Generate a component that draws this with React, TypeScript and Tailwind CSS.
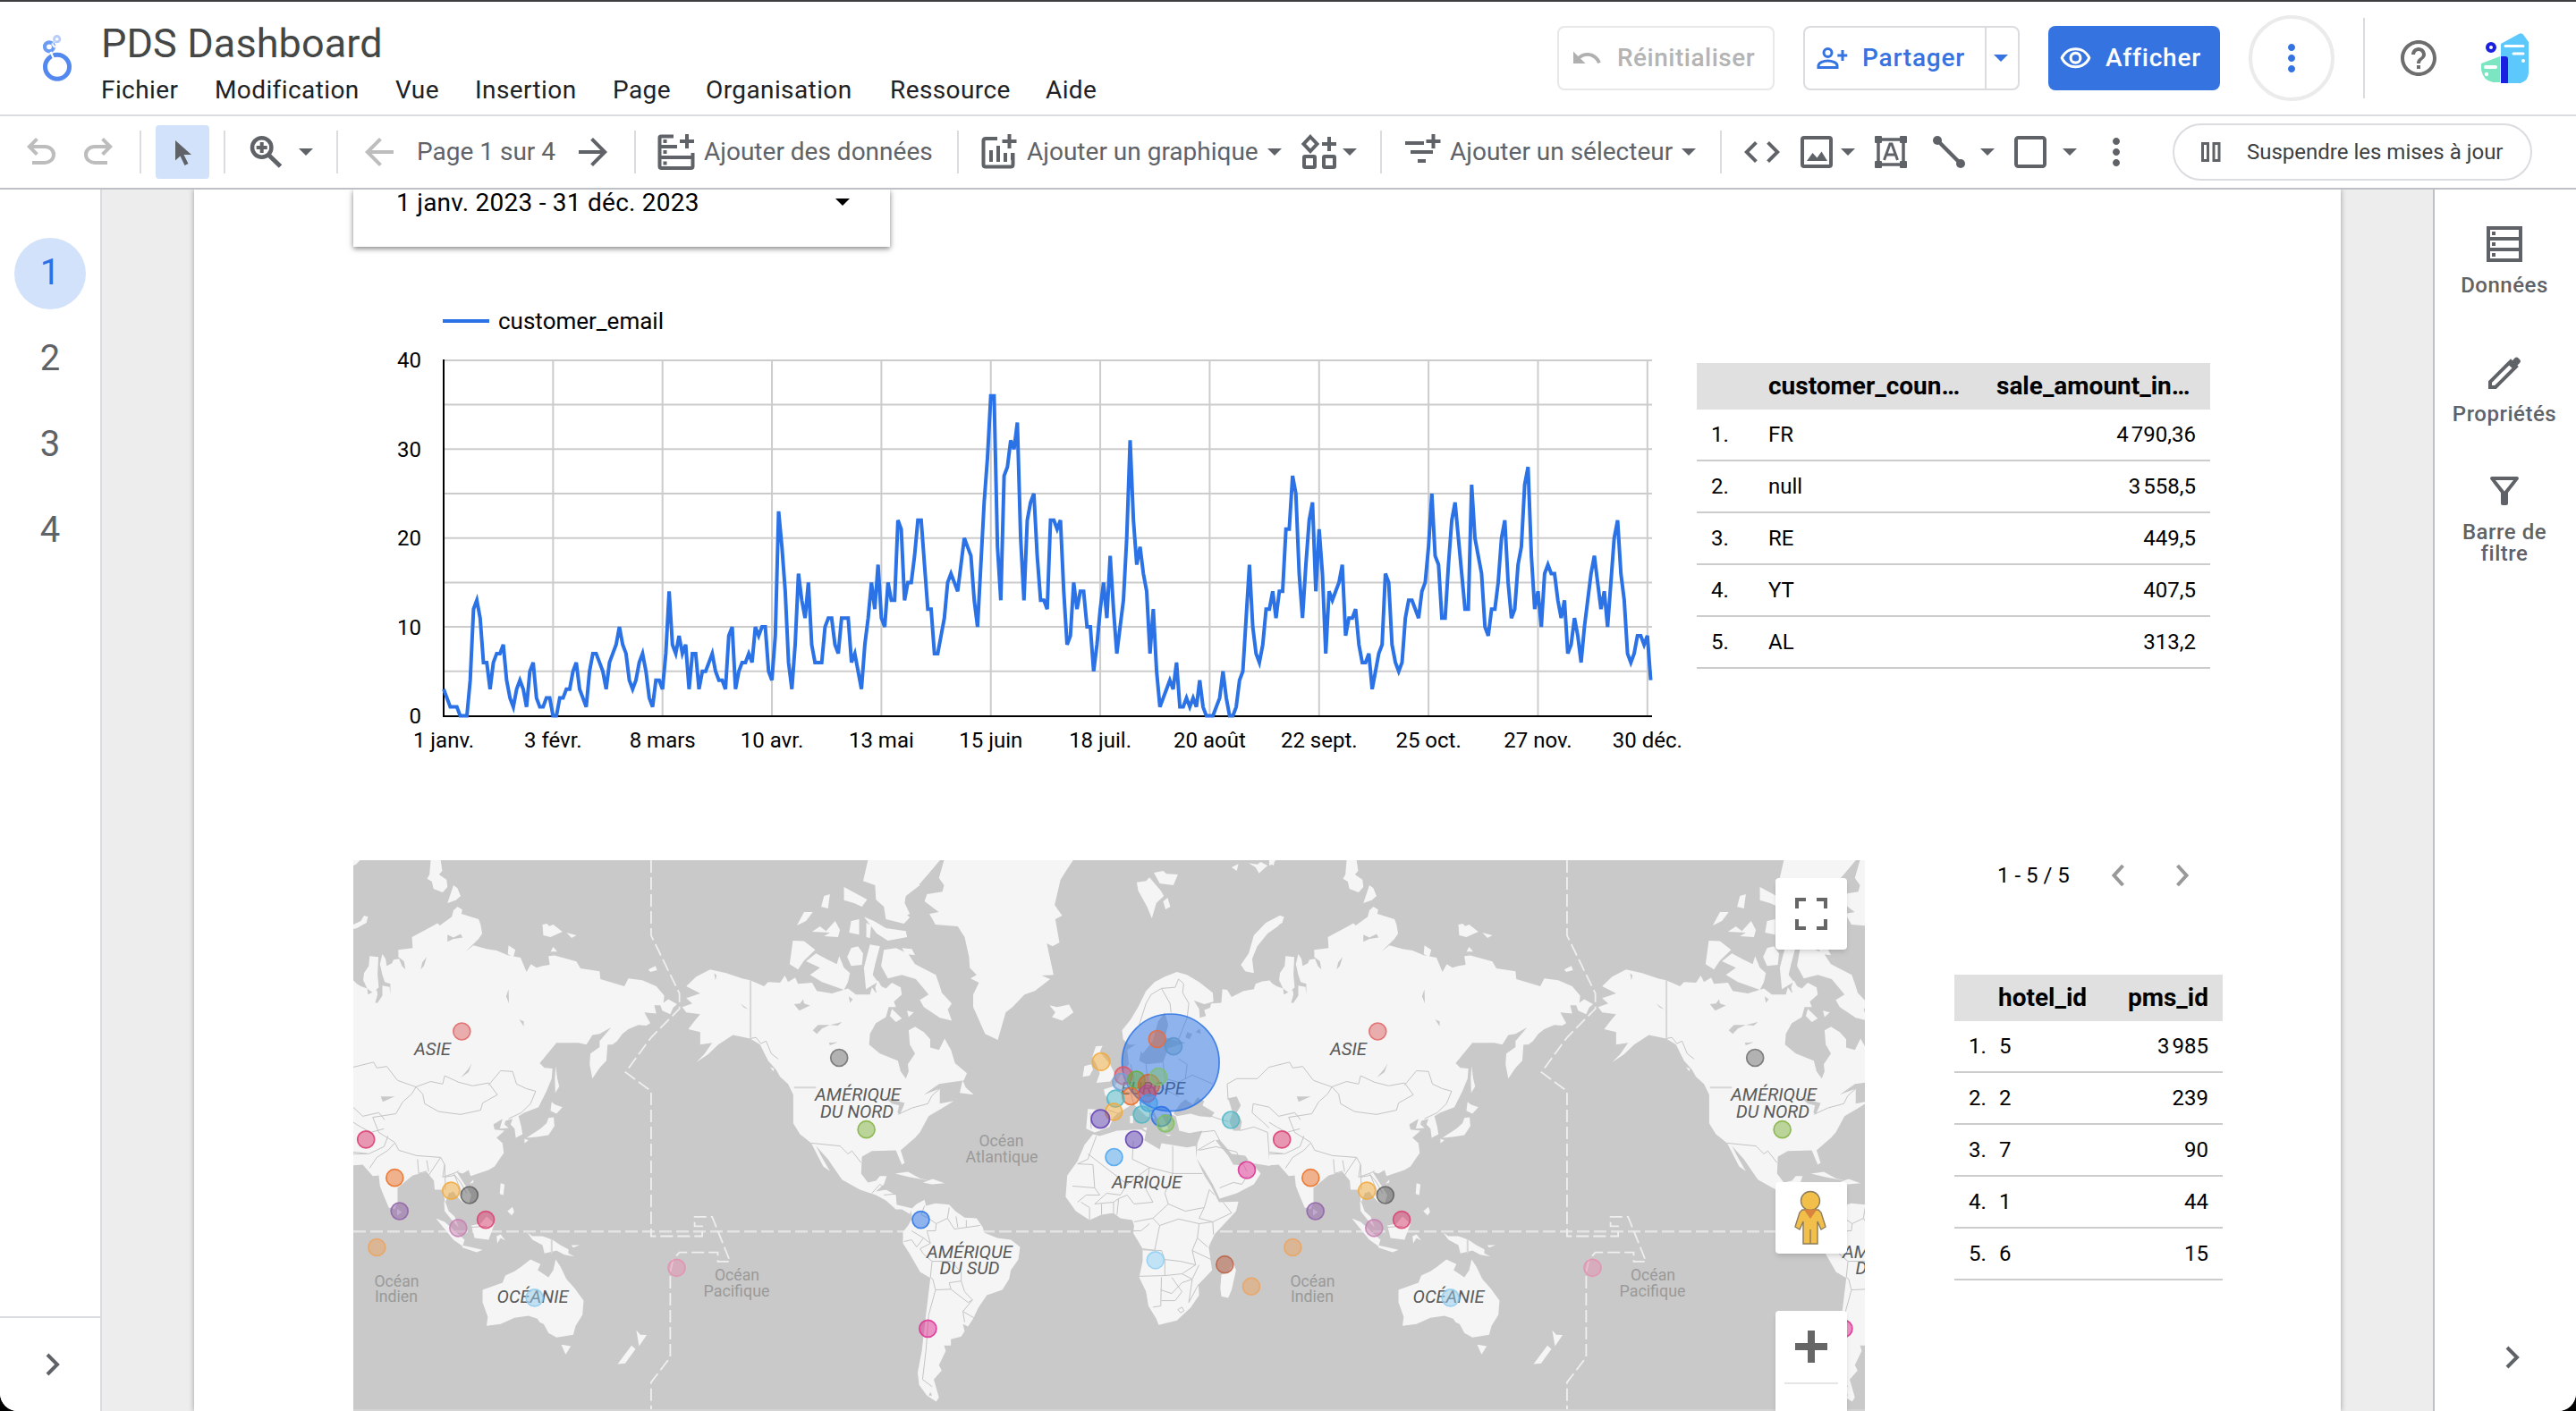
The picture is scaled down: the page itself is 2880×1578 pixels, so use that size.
import React from 'react';
import {
  MdArrowBack,
  MdArrowForward,
  MdCode,
  MdHelpOutline,
  MdMoreVert,
  MdOutlineFilterAlt,
  MdOutlineVisibility,
  MdUndo,
} from 'react-icons/md';

const UNDO =
  'M280-200v-80h284q63 0 109.5-40T720-420q0-60-46.5-100T564-560H312l104 104-56 56-200-200 200-200 56 56-104 104h252q97 0 169.5 63T800-420q0 94-72.5 157T564-200H280Z';

function Caret({ className = '' }: { className?: string }) {
  return (
    <svg className={'h-2 w-4 shrink-0 ' + className} viewBox="0 0 16 8" fill="currentColor">
      <path d="M0 0h16L8 8z" />
    </svg>
  );
}

function Divider({ className = '' }: { className?: string }) {
  return <div className={'h-12 w-0.5 shrink-0 bg-[#dadce0] ' + className} />;
}

const MENU: [string, string][] = [
  ['Fichier', 'w-[127px]'],
  ['Modification', 'w-[202px]'],
  ['Vue', 'w-[89px]'],
  ['Insertion', 'w-[154px]'],
  ['Page', 'w-[104px]'],
  ['Organisation', 'w-[206px]'],
  ['Ressource', 'w-[174px]'],
  ['Aide', 'w-[80px]'],
];

function Logo() {
  return (
    <svg className="h-[56px] w-[36px] overflow-visible" viewBox="0 0 36 56" fill="none">
      <circle cx="17.700" cy="3.700" r="3.200" stroke="#b4cdfa" strokeWidth="2.800" />
      <path d="M15.500 5.500l-4 4" stroke="#b4cdfa" strokeWidth="2" />
      <circle cx="9" cy="12.300" r="5" stroke="#6b9bf3" strokeWidth="4.200" />
      <circle cx="18" cy="34.700" r="13.500" stroke="#5388ef" strokeWidth="5" />
      <path d="M10.500 18l4 8.500M12 9l3.500 4" stroke="#fff" strokeWidth="2.200" />
      <path d="M11.800 9.500l4.200-4.200" stroke="#cfdffb" strokeWidth="1.600" />
    </svg>
  );
}

function Avatar() {
  return (
    <svg className="h-[58px] w-[54px]" viewBox="0 0 54 58">
      <path d="M22 13L42 2q4-2 6 2l5 7v34q0 9-9 12H22z" fill="#5cc8fb" />
      <path d="M0 35l21-8v29H13Q2 54 0 42z" fill="#7ce6c3" />
      <path d="M22 27h5q3 0 3 3v27h-8z" fill="#1b1fe0" />
      <circle cx="11" cy="17" r="4" fill="none" stroke="#1b1fe0" strokeWidth="4" />
      <path d="M27 15.500h20M36 24h11" stroke="#fff" strokeWidth="3" strokeLinecap="round" />
      <path d="M5 39h11" stroke="#fff" strokeWidth="4" strokeLinecap="round" />
      <circle cx="47" cy="32" r="2" fill="#fff" />
      <circle cx="6" cy="47" r="2.200" fill="#fff" />
    </svg>
  );
}

function Header() {
  return (
    <header className="flex h-[130px] border-t-2 border-b-2 border-t-[#3f3f42] border-b-[#dadce0] bg-white">
      <div className="mt-[38px] ml-[46px]">
        <Logo />
      </div>
      <div className="ml-[31px] flex h-[126px] w-[1400px] flex-col">
        <div className="mt-[18px] h-[58px] text-[45px] leading-[58px] tracking-[0.1px] text-[#444746]">PDS Dashboard</div>
        <nav className="mt-[4px] flex text-[28px] leading-[38px] tracking-[0.4px] text-[#202124]">
          {MENU.map(([label, w]) => (
            <div key={label} className={'shrink-0 whitespace-nowrap ' + w}>
              {label}
            </div>
          ))}
        </nav>
      </div>
      <div className="ml-[228px] flex h-[126px] items-center text-[28px] font-medium tracking-[0.5px]">
        <div className="flex h-[72px] w-[243px] items-center rounded-lg border-2 border-[#e8e8e8] pl-[13px] text-[#b4b4b4]">
          <MdUndo className="size-[36px] text-[#b0b0b0]" />
          <span className="ml-[16px]">Réinitialiser</span>
        </div>
        <div className="ml-[32px] flex h-[72px] w-[242px] items-center rounded-lg border-2 border-[#dadce0] text-[#3473e0]">
          <svg className="ml-[12px] size-[36px]" viewBox="0 0 24 24" fill="none" stroke="currentColor" strokeWidth="2">
            <circle cx="9" cy="8" r="3" />
            <path d="M2 19v-1.500c0-2.200 4.200-3.500 7-3.500s7 1.300 7 3.500V19zM20 6v8M16.200 10h7.300" />
          </svg>
          <span className="ml-[16px] w-[137px] tracking-[0.8px]">Partager</span>
          <div className="h-[68px] w-0.5 bg-[#dadce0]" />
          <Caret className="ml-[8px]" />
        </div>
        <div className="ml-[32px] flex h-[72px] w-[192px] items-center rounded-lg bg-[#3473e0] pl-[12px] text-white">
          <MdOutlineVisibility className="size-[37px]" />
          <span className="ml-[15px] tracking-[0.8px]">Afficher</span>
        </div>
        <div className="ml-[32px] flex size-[96px] items-center justify-center rounded-full border-4 border-[#ebebeb] text-[#3473e0]">
          <MdMoreVert className="size-12" />
        </div>
        <div className="ml-[32px] h-[90px] w-0.5 bg-[#dadce0]" />
        <MdHelpOutline className="ml-[36px] size-12 text-[#6e6e6e]" />
        <div className="ml-[46px]">
          <Avatar />
        </div>
      </div>
    </header>
  );
}

function Toolbar() {
  return (
    <div className="flex h-[82px] items-center border-b-2 border-[#bdc1c6] bg-white text-[28px] whitespace-nowrap text-[#5f6368]">
      <svg className="ml-[22px] size-12 shrink-0 text-[#bdbdbd]" viewBox="0 -960 960 960" fill="currentColor">
        <path d={UNDO} />
      </svg>
      <svg className="ml-[16px] size-12 shrink-0 -scale-x-100 text-[#bdbdbd]" viewBox="0 -960 960 960" fill="currentColor">
        <path d={UNDO} />
      </svg>
      <Divider className="ml-[22px]" />
      <div className="ml-[16px] flex h-[60px] w-[60px] shrink-0 items-center justify-center rounded bg-[#d3e2fb]">
        <svg className="mt-0.5 ml-0.5 h-[28px] w-[18px]" viewBox="0 0 18 28" fill="currentColor">
          <path d="M0 0v22.500l5.500-5 5 10.500 4-2-5-10H18z" />
        </svg>
      </div>
      <Divider className="ml-[16px]" />
      <svg className="ml-[22px] size-12 shrink-0" viewBox="0 0 48 48" fill="none" stroke="currentColor" strokeWidth="4.500">
        <circle cx="18.700" cy="19" r="10.700" />
        <path d="M26 27l13.500 13" strokeWidth="5" />
        <path d="M18.700 13v12M12.700 19h12" strokeWidth="4" />
      </svg>
      <Caret className="ml-[12px]" />
      <Divider className="ml-[26px]" />
      <MdArrowBack className="ml-[22px] size-12 shrink-0 text-[#bdbdbd]" />
      <div className="ml-[18px] w-[173px] shrink-0">Page 1 sur 4</div>
      <MdArrowForward className="size-12 shrink-0" />
      <Divider className="ml-[22px]" />
      <svg className="ml-[24px] h-[42px] w-[42px] shrink-0" viewBox="0 0 42 42" fill="none" stroke="currentColor" strokeWidth="4">
        <path d="M18 3.500H4q-1.500 0-1.500 1.500v32q0 2 2 2h33q2 0 2-2V22M2 15h20M2 27h38M33 1v16M25 9h16" />
        <path d="M8.500 7v4M8.500 19v4M8.500 31.500v4" />
      </svg>
      <div className="ml-[10px] w-[283px] shrink-0">Ajouter des données</div>
      <Divider />
      <svg className="ml-[25px] h-[42px] w-[40px] shrink-0" viewBox="0 0 40 42" fill="none" stroke="currentColor" strokeWidth="4">
        <path d="M18 6H5q-2.500 0-2.500 2.500V35q0 2.500 2.500 2.500h28q2.500 0 2.500-2.500V22M11 19v13M19 14v18M27 22v10M35 22v8M31.500 1v16M23.500 9h16" />
      </svg>
      <div className="ml-[11px] w-[269px] shrink-0">Ajouter un graphique</div>
      <Caret />
      <svg className="ml-[21px] h-[42px] w-[42px] shrink-0" viewBox="0 0 42 42" fill="none" stroke="currentColor" strokeWidth="4">
        <path d="M11 4l7.500 8-7.500 8-7.500-8zM32 4v16M24 12h16" />
        <rect x="4" y="26" width="12" height="12" rx="1" />
        <rect x="26" y="26" width="12" height="12" rx="1" />
      </svg>
      <Caret className="ml-[5px]" />
      <Divider className="ml-[26px]" />
      <svg className="ml-[26px] h-[42px] w-[40px] shrink-0" viewBox="0 0 40 42" fill="none" stroke="currentColor" strokeWidth="4">
        <path d="M0 11h21M6 21h25M14 31h9M31.500 1v16M23.500 9h16" />
      </svg>
      <div className="ml-[10px] w-[259px] shrink-0">Ajouter un sélecteur</div>
      <Caret />
      <Divider className="ml-[27px]" />
      <MdCode className="ml-[21px] size-12 shrink-0" />
      <svg className="ml-[19px] size-9 shrink-0" viewBox="0 0 36 36">
        <rect x="2" y="2" width="32" height="32" rx="2" fill="none" stroke="currentColor" strokeWidth="4" />
        <path d="M7 28l6.500-9 5 5.500 5-7L30 28z" fill="currentColor" />
      </svg>
      <Caret className="ml-[9px]" />
      <svg className="ml-[22px] size-9 shrink-0" viewBox="0 0 36 36" fill="none" stroke="currentColor">
        <rect x="4" y="4" width="28" height="28" strokeWidth="3.500" />
        <path d="M0 4h8M4 0v8M28 4h8M32 0v8M0 32h8M4 28v8M28 32h8M32 28v8" strokeWidth="7" />
        <path d="M10.500 27l6.500-18h2l6.500 18M13 21h10" strokeWidth="3" />
      </svg>
      <svg className="ml-[29px] size-9 shrink-0" viewBox="0 0 36 36" fill="currentColor">
        <circle cx="5" cy="5" r="5" />
        <circle cx="31" cy="31" r="5" />
        <path d="M5 5l26 26" stroke="currentColor" strokeWidth="4.500" />
      </svg>
      <Caret className="ml-[17px]" />
      <svg className="ml-[22px] size-9 shrink-0" viewBox="0 0 36 36">
        <rect x="2" y="2" width="32" height="32" rx="2.500" fill="none" stroke="currentColor" strokeWidth="4" />
      </svg>
      <Caret className="ml-[18px]" />
      <MdMoreVert className="ml-[20px] size-12 shrink-0" />
      <div className="ml-[39px] flex h-[64px] w-[402px] shrink-0 items-center rounded-full border-2 border-[#dadce0] text-[24px] text-[#3c4043]">
        <svg className="ml-[30px] h-[22px] w-[22px]" viewBox="0 0 22 22" fill="none" stroke="#5f6368" strokeWidth="3">
          <rect x="1.500" y="1.500" width="6" height="19" />
          <rect x="14" y="1.500" width="6" height="19" />
        </svg>
        <span className="ml-[29px]">Suspendre les mises à jour</span>
      </div>
    </div>
  );
}

const SERIES = [
  3, 2, 1, 1, 1, 0, 0, 0, 4, 12, 13, 11, 6, 6, 3, 6, 7, 7, 8, 4, 2, 1, 3, 4, 3, 1, 5, 6, 2, 1, 1, 2, 2, 0, 0, 2, 2, 3,
  3, 5, 6, 3, 2, 1, 5, 7, 7, 6, 5, 3, 6, 7, 8, 10, 8, 7, 4, 3, 4, 6, 7, 5, 2, 1, 4, 4, 3, 7, 14, 8, 7, 9, 7, 8, 3, 7,
  7, 3, 5, 5, 6, 7, 5, 4, 4, 3, 9, 10, 3, 5, 6, 6, 7, 6, 10, 9, 10, 10, 5, 4, 9, 23, 19, 14, 6, 3, 8, 16, 13, 11, 15,
  8, 6, 6, 6, 10, 11, 11, 8, 7, 11, 11, 11, 6, 7, 5, 3, 8, 11, 15, 12, 17, 11, 10, 15, 13, 13, 22, 21, 13, 15, 15,
  18, 22, 22, 17, 12, 12, 7, 7, 9, 11, 15, 16, 15, 14, 17, 20, 19, 18, 13, 10, 17, 24, 29, 36, 36, 19, 13, 27, 28,
  31, 30, 33, 20, 13, 22, 24, 25, 18, 13, 13, 12, 22, 22, 21, 22, 14, 8, 9, 15, 12, 14, 14, 10, 10, 5, 8, 12, 15, 11,
  18, 12, 7, 10, 13, 20, 31, 22, 17, 19, 16, 14, 7, 12, 5, 1, 2, 3, 4, 3, 6, 1, 1, 2, 1, 2, 1, 4, 1, 0, 0, 0, 1, 2, 5,
  2, 0, 0, 1, 4, 5, 11, 17, 10, 7, 6, 8, 12, 12, 14, 11, 14, 14, 21, 21, 27, 25, 16, 11, 17, 22, 24, 14, 21, 16, 7,
  14, 13, 14, 15, 17, 9, 11, 11, 12, 8, 6, 6, 7, 3, 5, 7, 8, 16, 15, 8, 6, 5, 6, 11, 13, 13, 12, 11, 14, 15, 19, 25,
  18, 17, 11, 11, 17, 22, 24, 20, 16, 12, 12, 26, 20, 18, 16, 10, 9, 12, 12, 15, 20, 22, 15, 11, 12, 17, 19, 26, 28,
  18, 12, 14, 10, 16, 17, 16, 16, 13, 11, 13, 7, 8, 11, 9, 6, 10, 13, 16, 18, 15, 12, 14, 10, 15, 20, 22, 16, 13, 7,
  6, 7, 9, 9, 8, 9, 4,
];
const X_LABELS = [
  '1 janv.', '3 févr.', '8 mars', '10 avr.', '13 mai', '15 juin', '18 juil.', '20 août', '22 sept.', '25 oct.',
  '27 nov.', '30 déc.',
];
const X0 = 101;
const DX = 3.7075;
const Y0 = 470.5;
const DY = 9.94;

function Chart() {
  const points = SERIES.map((v, i) => `${(X0 + i * DX).toFixed(1)},${(Y0 - v * DY).toFixed(1)}`).join(' ');
  return (
    <svg className="h-[560px] w-[1490px] shrink-0" viewBox="0 0 1490 560">
      <path d="M100 29h52" stroke="#2a72e5" strokeWidth="4" />
      <text x="162" y="38" fontSize="25.500" textLength="185" lengthAdjust="spacingAndGlyphs">customer_email</text>
      {[5, 10, 15, 20, 25, 30, 35, 40].map((v) => (
        <path key={v} d={`M${X0} ${Y0 - v * DY}H1452`} stroke="#ccc" strokeWidth="2" />
      ))}
      {X_LABELS.map((label, i) => (
        <g key={label}>
          {i > 0 && <path d={`M${X0 + i * 33 * DX} 73V470`} stroke="#ccc" strokeWidth="2" />}
          <text x={X0 + i * 33 * DX} y="505.500" fontSize="24" textAnchor="middle">{label}</text>
        </g>
      ))}
      {[0, 10, 20, 30, 40].map((v) => (
        <text key={v} x="76" y={Y0 - v * DY + 8.500} fontSize="24" textAnchor="end">{v}</text>
      ))}
      <path d="M101 72V471H1452" fill="none" stroke="#000" strokeWidth="2" />
      <polyline points={points} fill="none" stroke="#2a72e5" strokeWidth="4" />
    </svg>
  );
}

/* The world is drawn as one 1024px tile: the west part (Asia to America) and the east part (Atlantic to Asia). */
const WEST = 'translate(390 950) scale(0.44643 0.40048)';
const EAST = 'translate(1000 950) scale(0.38270 0.40048)';

const WEST_LAND = [
  'M11,365 20,375 30,382 46,388 48,405 60,398 70,392 72,405 66,428 72,428 84,408 84,380 102,384 104,405 104,375 90,370 84,350 78,320 84,292 92,305 95,325 108,318 112,308 126,305 133,325 142,335 138,312 124,300 124,280 160,275 158,245 200,220 222,206 228,212 258,188 262,170 272,160 284,168 282,180 325,195 330,210 334,235 325,250 292,285 312,268 345,278 370,282 398,295 430,302 445,342 456,320 470,330 485,325 503,322 500,298 515,296 570,313 580,332 628,340 630,362 690,382 700,360 735,365 770,382 790,408 788,428 800,418 822,432 812,442 805,460 785,450 780,435 765,435 770,458 740,455 755,485 745,492 725,490 700,502 685,515 672,535 660,545 648,545 645,590 628,610 610,640 603,600 605,570 628,552 628,535 657,497 628,515 610,518 595,545 575,540 520,540 478,597 490,610 510,612 508,640 495,675 475,720 440,735 425,745 432,775 435,795 418,805 415,780 405,768 410,752 392,758 390,768 400,778 378,780 385,752 362,768 365,782 390,785 370,805 385,820 388,848 365,885 350,895 305,912 300,895 285,905 270,900 290,935 307,965 300,990 285,985 270,968 262,955 250,960 242,985 250,1010 265,1025 275,1055 258,1035 240,1010 238,975 235,950 215,950 213,925 195,900 160,910 122,945 122,985 115,1005 100,1000 85,960 78,940 75,910 60,912 35,880 11,882Z',
  'M52,298 74,300 72,350 75,385 60,400 46,388 36,365 38,345 50,325Z',
  'M11,210 30,200 38,185 48,188 44,205 20,220 11,222Z M11,30 28,30 18,42 11,45Z',
  'M205,30 230,30 234,60 226,70 245,85 247,105 235,120 212,110 208,90 196,82 202,70Z M262,100 272,108 280,130 268,142 247,150Z',
  'M485,210 496,207 502,214 512,210 535,230 505,245 487,240Z M545,232 570,240 558,247Z M512,272 522,285 505,285Z M750,335 768,325 772,337 755,342Z M400,268 417,280 412,300 398,292Z',
  'M518,605 522,640 527,662 517,680 516,640Z M508,705 516,712 535,720 520,738 505,730Z M500,750 513,748 515,772 500,798 470,803 445,805 480,780 495,765Z M440,808 450,812 440,820Z',
  'M380,932 390,935 387,965 378,962Z M397,1010 410,998 414,1012 408,1022Z M312,922 302,934 312,930Z M218,1030 240,1040 290,1090 285,1108 262,1090Z M283,1105 335,1118 320,1125 285,1112Z M307,1050 330,1045 345,1025 365,1045 350,1090 315,1085Z M370,1080 380,1075 392,1092 380,1085 372,1100Z',
  'M447,1070 460,1080 485,1080 510,1090 530,1105 550,1117 550,1128 565,1137 540,1132 520,1120 490,1128 485,1105 460,1090Z M557,1105 578,1105 562,1112Z M121,1003 133,1013 121,1022Z',
  'M335,1230 385,1210 392,1190 415,1178 432,1165 455,1145 480,1158 473,1175 500,1195 512,1175 518,1145 530,1165 545,1200 565,1225 588,1260 585,1300 568,1330 562,1355 520,1363 500,1350 488,1325 478,1320 472,1310 450,1302 415,1308 380,1325 345,1330 348,1305 335,1265Z M532,1383 556,1387 543,1410Z M720,1343 730,1355 746,1356 727,1387Z M708,1385 718,1395 692,1435 673,1437 690,1412Z',
  'M845,382 870,355 905,335 945,345 985,360 1005,365 1040,382 1050,370 1080,372 1092,352 1100,370 1118,358 1125,375 1160,372 1172,395 1210,402 1250,388 1270,405 1305,405 1310,385 1320,400 1330,380 1345,388 1360,372 1382,385 1385,405 1365,425 1370,440 1352,440 1345,468 1320,485 1305,515 1303,545 1330,570 1375,590 1382,620 1395,640 1402,620 1400,600 1418,570 1405,545 1402,505 1418,495 1440,510 1456,530 1456,553 1478,560 1492,528 1508,560 1518,597 1548,625 1540,645 1478,655 1440,685 1480,668 1480,710 1515,702 1490,720 1452,745 1430,790 1418,805 1382,840 1392,875 1385,880 1370,840 1310,842 1285,858 1283,905 1300,930 1320,925 1330,912 1347,912 1340,935 1320,955 1345,950 1370,965 1372,992 1410,1002 1405,1018 1385,1005 1370,1005 1345,980 1320,965 1280,950 1235,922 1200,865 1170,828 1185,860 1205,898 1188,885 1172,850 1158,820 1130,795 1113,765 1113,685 1100,655 1080,635 1070,615 1050,590 1030,545 1005,528 962,518 925,545 900,572 870,594 890,572 910,540 880,545 880,510 850,502 865,480 880,460 845,455 835,440 860,430 845,415 880,402Z',
  'M1112,255 1140,256 1168,280 1140,310 1125,335 1104,320Z M1170,290 1195,305 1222,320 1228,298 1240,330 1255,345 1250,370 1240,392 1185,370 1155,350 1180,330 1145,312Z',
  'M1180,215 1195,228 1218,200 1230,225 1225,245 1190,242 1205,232 1160,230Z M1140,175 1162,175 1145,200 1122,212Z M1190,130 1205,125 1200,165 1183,160Z M1240,105 1265,120 1298,140 1285,160 1265,150 1240,142Z',
  'M1300,30 1360,30 1400,62 1425,75 1430,100 1395,130 1385,170 1405,190 1390,207 1345,195 1340,160 1320,140 1318,100 1288,88Z M1345,30 1480,30 1450,70 1425,100 1385,90Z',
  'M1290,188 1315,200 1345,220 1395,228 1398,245 1350,255 1322,235Z M1258,200 1278,195 1278,238 1253,232Z M1296,205 1308,212 1305,248 1296,245Z',
  'M1258,275 1275,270 1288,290 1285,322 1258,325 1248,300Z M1305,265 1330,270 1318,320 1312,350 1325,370 1295,390 1290,330Z M1318,385 1325,365 1335,385 1322,402Z',
  'M1340,280 1370,275 1400,290 1418,320 1470,350 1478,375 1485,400 1510,430 1500,447 1510,478 1480,470 1440,440 1430,420 1452,405 1420,362 1385,350 1350,360 1333,325Z M1385,275 1410,278 1418,295 1395,292Z M1360,445 1385,472 1370,482 1355,465Z M1398,450 1415,455 1402,468Z',
  'M1537,645 1545,665 1565,685 1530,680Z M1368,905 1400,900 1430,918 1455,925 1405,915Z M1438,930 1462,920 1492,932 1460,935Z M1055,608 1065,612 1063,620Z',
];
const WEST_WATER = [
  'M308,597 300,622 281,637 300,612Z M247,238 262,246 280,236 285,246 262,250 247,258Z M195,300 188,325 180,335 184,315Z M400,390 401,430 394,410Z M427,475 438,480 438,494Z M80,690 115,690 85,705Z',
  'M1115,432 1130,430 1138,418 1140,430 1155,436 1128,450Z M1162,505 1175,490 1205,490 1185,500 1172,515Z M1205,490 1235,482 1225,492Z M1202,540 1225,538 1205,547Z M915,345 921,352 918,366Z M980,430 1000,446 990,442Z M1252,410 1262,418 1255,428Z',
  'M1340,690 1365,700 1392,708 1388,720 1380,740 1374,735 1378,715 1360,710 1350,700Z',
];
const WEST_BORDERS = [
  'M11,608 62,594 70,610 95,606 122,645 168,663 205,648 235,655 240,632 275,650 310,660 350,652 372,685 335,708 330,728 280,740 225,732 190,710 185,683 168,663',
  'M350,658 380,618 410,620 420,655 445,668 468,675 455,710 432,735 400,752M168,663 158,682 135,705 118,738 60,748 75,790 115,818 125,840 170,855 230,860 240,880 235,915 262,905 275,898',
  'M11,720 35,745 75,735 90,755M11,762 30,775 55,790 88,780M11,845 50,850 88,830 98,800M11,850 45,850M52,890 70,860 98,840 115,820M172,865 175,905 195,898M195,868 200,900M230,860 195,918M240,880 242,950M240,915 265,910 285,965M262,905 280,930 295,960',
  'M235,960 240,985M307,1055 345,1052M1005,528 1020,525 1032,542 1045,535 1058,570 1075,585M1375,740 1410,722 1450,710 1460,688 1480,668M1158,820 1230,828 1250,850 1260,842 1283,875M1310,960 1330,935 1345,950M1340,965 1370,962',
];

const EAST_LAND = [
  'M145,30 522,30 500,62 485,85 468,155 490,185 470,195 482,260 462,270 445,262 465,350 430,352 455,362 410,395 380,405 345,440 325,455 302,532 265,515 230,440 230,405 247,372 222,360 240,350 220,330 218,300 205,245 185,215 120,210 102,180 130,175 88,145 95,125 140,118 145,100 130,80Z',
  'M0,30 132,30 75,95 35,112 30,150 45,180 0,200Z M0,60 40,90 0,120Z',
  'M453,435 475,440 510,433 523,455 490,478 460,468 470,455Z M708,92 735,88 745,78 778,115 787,130 765,150 752,192 738,160 712,115Z M758,65 785,60 795,68 828,70 815,100 775,95Z M785,145 798,135 806,160 792,167Z M985,50 1005,40 1000,60Z M1035,38 1060,42 1070,35 1090,45 1065,67 1055,50Z M1098,40 1110,35 1108,45Z',
  'M1125,185 1138,190 1120,215 1090,235 1060,270 1045,305 1050,345 1025,340 1012,322 1035,290 1050,240 1085,205Z',
  'M665,505 690,475 712,440 735,395 760,370 790,355 825,342 855,350 890,370 930,400 932,425 905,432 875,422 890,445 892,470 910,465 905,448 922,442 925,430 955,428 958,390 972,392 985,412 1020,395 1050,390 1055,375 1075,368 1097,366 1097,884 1040,875 1025,855 985,850 950,810 938,812 975,855 990,880 1015,882 1035,865 1070,905 1050,935 1000,960 950,975 930,935 905,895 882,862 885,820 900,785 862,792 832,785 822,745 808,740 780,740 800,780 785,785 762,740 745,705 725,702 745,730 762,752 735,745 700,712 690,715 655,735 640,748 628,775 600,785 585,790 560,780 565,725 620,728 630,705 615,685 612,670 645,660 665,620 685,600 680,560 705,545 722,552 715,590 735,600 785,595 800,555 850,540 790,525 800,490 790,455 770,480 755,535 725,570 708,545 685,545 668,530Z',
  'M588,550 608,548 600,565 630,600 645,630 630,648 590,652 600,625 590,600 578,580Z M555,605 575,600 580,615 570,632 550,635Z M725,778 738,776 735,786Z M688,745 698,743 697,765 688,765Z M790,795 810,797 800,800Z',
  'M580,795 600,800 650,785 720,782 735,790 730,812 775,838 780,820 855,832 880,828 882,862 905,910 925,940 948,985 1005,983 998,1010 935,1075 918,1110 928,1175 888,1215 890,1245 865,1280 825,1315 772,1328 765,1310 742,1275 735,1235 715,1195 725,1150 725,1115 698,1072 700,1050 695,1035 660,1030 640,1015 605,1020 570,1035 530,1010 500,970 505,910 535,870 555,825Z M990,1155 998,1175 985,1230 975,1252 955,1248 952,1225 955,1188 975,1180Z',
  'M48,1005 65,990 88,978 92,995 120,988 160,992 178,1010 205,1028 240,1030 258,1055 262,1070 300,1085 340,1090 367,1110 362,1145 340,1175 335,1200 315,1230 270,1245 245,1280 230,1310 215,1332 200,1325 205,1345 195,1360 165,1368 165,1385 145,1385 150,1400 130,1440 138,1455 115,1480 130,1530 122,1542 95,1525 72,1495 68,1460 80,1400 92,1300 105,1197 75,1180 45,1130 25,1100 25,1068 40,1050 52,1030Z',
];
const EAST_WATER = [
  'M815,738 835,710 850,698 872,712 885,692 905,702 900,715 935,735 925,748 890,745 865,738 825,745Z M975,695 1000,690 1012,715 1000,735 1015,760 1010,785 990,785 978,760 988,735Z M855,510 870,515 862,530 850,525Z M880,510 892,500 895,515Z',
  'M105,1515 110,1525 100,1525Z',
];
const EAST_BORDERS = [
  'M715,490 735,430 750,405 780,388 820,385 830,362 845,375 842,400 860,430 855,470 830,530M780,388 805,430 808,455M735,600 740,650 720,670 690,680M785,595 790,640 830,650 870,630 930,655M830,585 855,600 850,640M690,600 700,640 690,680 700,712M740,650 780,665 830,690M640,660 665,675 690,680',
  'M572,735 575,780M625,728 655,738M900,735 940,750 975,760M890,790 935,785 950,812M890,840 940,830 1000,845 1010,875M885,840 935,812M1020,880 1030,900M950,945 990,930 1015,935 1030,912M975,700 972,655 1000,640 1060,640 1097,605M1045,735 1048,710 1097,720M1010,785 1050,775 1090,790 1097,880M1045,735 1075,760 1097,780',
  'M590,800 565,865 535,878M565,850 680,935 745,888 815,905M698,815 695,865 745,888M813,828 813,905M813,905 900,905M535,878 580,880 585,945 520,940M585,945 600,965 560,965 535,985M680,935 660,965 620,960 585,990M745,888 735,950 755,985 700,990 680,965M813,905 790,960 800,990 755,1030 700,1040M800,990 850,1010 905,1000 920,950 935,965M545,985 570,1000 570,1035M605,990 605,1020M640,985 640,1015M655,975 650,1020M585,990 640,985 655,975 680,965M905,1000 890,1030 930,1040 985,1015 960,985M755,1030 775,1050 760,1120 725,1115M775,1050 830,1032 890,1045 885,1085 870,1120 880,1160 835,1150 790,1145 780,1120 725,1118M890,1045 930,1040 932,1075M885,1085 915,1110M870,1120 925,1145M880,1160 840,1185 790,1190 715,1192M790,1145 790,1190M780,1195 778,1275 755,1278M778,1230 810,1240 840,1210 870,1200 890,1160M840,1185 870,1200 860,1265 888,1215M828,1285 840,1278 846,1288 836,1294Z M698,1065 720,1065 745,1045M810,1195 840,1235 820,1260 780,1260',
  'M88,995 78,1020 100,1030 122,1045 120,1065 95,1065 105,1100 85,1085 65,1110 50,1090 28,1095M122,1045 155,1030 160,1000M155,1030 175,1060 250,1050M180,1025 185,1055M210,1035 210,1055M50,1065 85,1085M85,1130 75,1115 105,1100M85,1130 110,1150 105,1195 112,1200 120,1230 100,1300 92,1400 82,1480 110,1500M120,1230 165,1228 160,1210 195,1205 195,1180 165,1150 110,1150M195,1205 205,1235 228,1258 200,1290 205,1320M165,1228 215,1265 228,1258M200,1290 232,1308',
];

const DATELINE =
  'M757,30 V240 L828,402 V445 L757,525 693,622 757,675 V1080 H885 V1052 H866 V1026 H910 L955,1151 H924 V1125 H828 L812,1145 805,1180 V1418 L757,1488 V1568';

const CONTINENT_LABELS: [string, number, number, number][] = [
  ['ASIE', 483.500, 1180, 41],
  ['AMÉRIQUE', 959, 1231, 96],
  ['DU NORD', 958, 1250, 82],
  ['AMÉRIQUE', 1084, 1406.500, 96],
  ['DU SUD', 1084, 1425, 67],
  ['EUROPE', 1289, 1224, 72],
  ['AFRIQUE', 1282, 1329, 78],
  ['OCÉANIE', 595.500, 1457, 80],
];
const OCEAN_LABELS: [string, number, number, number][] = [
  ['Océan', 443.500, 1439, 50],
  ['Indien', 443, 1456, 48],
  ['Océan', 824, 1432, 50],
  ['Pacifique', 823.500, 1450, 74],
  ['Océan', 1119.500, 1282, 50],
  ['Atlantique', 1120, 1300, 81],
];

/* [x, y, radius, color] */
const DOTS: [number, number, number, string][] = [
  [1308.800, 1188.300, 54.300, '#2a72e5'],
  [516.300, 1153.500, 9.500, '#e06666'],
  [938.200, 1183, 9.500, '#707070'],
  [968.600, 1263.200, 9.500, '#81b340'],
  [409.200, 1274.400, 9.500, '#d93a6e'],
  [441.300, 1317.200, 9.500, '#ea6f25'],
  [504.300, 1331.600, 9.500, '#f2a93b'],
  [524.800, 1336.500, 9.500, '#5f5f5f'],
  [446.700, 1354.500, 9.500, '#9060a8'],
  [512.300, 1373.300, 9.500, '#c77fb2'],
  [543.100, 1364.100, 9.500, '#dc3f72'],
  [421.300, 1395, 9.500, '#eba460'],
  [756.500, 1417.800, 9.500, '#e58fb0'],
  [597.600, 1451.400, 9.500, '#8fcbee'],
  [1029.500, 1364.100, 9.500, '#2a72e5'],
  [1037.400, 1485.900, 9.500, '#dd2f92'],
  [1231, 1187.300, 9.800, '#f2a93b'],
  [1293.800, 1162, 9.500, '#ea6b3c'],
  [1312, 1170.200, 9.500, '#5c94cc'],
  [1256, 1203, 9.800, '#e05464'],
  [1253.200, 1210, 9.300, '#6fa3dc'],
  [1270.500, 1207.500, 9.500, '#66b030'],
  [1284.500, 1213.500, 11.800, '#d2622c'],
  [1295.200, 1204, 9.500, '#7cc070'],
  [1282.700, 1223, 9.500, '#b04a8e'],
  [1264.300, 1226, 9.500, '#ea6b25'],
  [1247.200, 1228.700, 9.500, '#4db6c6'],
  [1245.200, 1243.400, 9.500, '#f2a93b'],
  [1284.400, 1233.500, 9.500, '#3c9bec'],
  [1276.600, 1246.500, 9.500, '#4db6c6'],
  [1230.300, 1251.400, 10.200, '#6040b0'],
  [1298.400, 1248.600, 11, '#2a72e5'],
  [1303.100, 1256.500, 9.500, '#7cc060'],
  [1376.200, 1252.500, 9.500, '#4db6c6'],
  [1268, 1274.500, 9.500, '#5c3cae'],
  [1245.500, 1294, 9.500, '#4ba3ee'],
  [1394, 1308.500, 9.500, '#dd2f92'],
  [1291.800, 1409.300, 9.500, '#8fcff5'],
  [1369.300, 1414.200, 9.500, '#bb6146'],
  [1399, 1438.700, 9.500, '#eba460'],
];

function WorldTile() {
  return (
    <>
      <g transform={WEST}>
        <path d={DATELINE} fill="none" stroke="#efefef" strokeWidth="1.800" strokeDasharray="14 5" vectorEffect="non-scaling-stroke" />
        <path d={WEST_LAND.join(' ')} fill="#f5f5f5" />
        <path d={WEST_WATER.join(' ')} fill="#c9c9c9" />
        <path d={WEST_BORDERS.join(' ')} fill="none" stroke="#c4c4c4" strokeWidth="1" vectorEffect="non-scaling-stroke" />
        <path d="M1006,365V526M1115,665H1170M508,1088V1128" fill="none" stroke="#d6d6d6" strokeWidth="2" vectorEffect="non-scaling-stroke" />
      </g>
      <g transform={EAST}>
        <path d={EAST_LAND.join(' ')} fill="#f5f5f5" />
        <path d={EAST_WATER.join(' ')} fill="#c9c9c9" />
        <path d={EAST_BORDERS.join(' ')} fill="none" stroke="#c4c4c4" strokeWidth="1" vectorEffect="non-scaling-stroke" />
      </g>
      {CONTINENT_LABELS.map(([t, x, y, w]) => (
        <text key={t + x + y} x={x} y={y} textLength={w} lengthAdjust="spacingAndGlyphs" textAnchor="middle" fontSize="20.500" fontStyle="italic" fill="#5a5a5a">
          {t}
        </text>
      ))}
      {OCEAN_LABELS.map(([t, x, y, w]) => (
        <text key={t + x + y} x={x} y={y} textLength={w} lengthAdjust="spacingAndGlyphs" textAnchor="middle" fontSize="18" fill="#9a9a9a">
          {t}
        </text>
      ))}
    </>
  );
}

function Dots() {
  return (
    <>
      {DOTS.map(([x, y, r, c], i) => (
        <circle key={i} cx={x} cy={y} r={r} fill={c} fillOpacity="0.5" stroke={c} strokeOpacity="0.85" strokeWidth="1.700" />
      ))}
    </>
  );
}

function WorldMap() {
  return (
    <div className="relative h-[616px] w-[1690px] shrink-0 overflow-hidden bg-[#c9c9c9]">
      <svg className="block h-[616px] w-[1690px]" viewBox="395 962 1690 616">
        <path d="M395 1377.300H2085" stroke="#e4e4e4" strokeWidth="2.500" strokeDasharray="14 5" />
        <WorldTile />
        <g transform="translate(1024 0)">
          <WorldTile />
        </g>
        <Dots />
        <g transform="translate(1024 0)">
          <Dots />
        </g>
        <path d="M395 1577H2085" stroke="#d4d4d4" strokeWidth="2" />
      </svg>
      <div className="absolute top-[20px] left-[1590px] flex size-20 items-center justify-center rounded bg-white shadow-md">
        <svg className="size-9" viewBox="0 0 36 36" fill="none" stroke="#666" strokeWidth="4">
          <path d="M12 2H2v10M24 2h10v10M12 34H2V24M24 34h10V24" />
        </svg>
      </div>
      <div className="absolute top-[360px] left-[1590px] flex size-20 items-center justify-center rounded bg-white shadow-md">
        <svg className="-mt-px -ml-0.5 h-[62px] w-[36px]" viewBox="0 0 36 62" fill="#f3bf4b" stroke="#8a7c5c" strokeWidth="1.400">
          <path d="M9 22h18l3 3 5 16-5 3-4-9v25H10V35l-4 9-5-3 5-16z" />
          <path d="M18 44v16" />
          <circle cx="18" cy="12" r="10.500" />
          <path d="M10.500 21.500h15L18 32z" fill="#d8843c" stroke="none" />
        </svg>
      </div>
      <div className="absolute top-[504px] left-[1590px] h-[160px] w-20 rounded bg-white shadow-md">
        <svg className="mt-[22px] ml-[22px] size-9" viewBox="0 0 36 36" stroke="#666" strokeWidth="8">
          <path d="M18 0v36M0 18h36" />
        </svg>
        <div className="mx-auto mt-[22px] h-0.5 w-[60px] bg-[#e6e6e6]" />
      </div>
    </div>
  );
}

function CountryTable() {
  const rows = [
    ['1.', 'FR', '4\u202f790,36'],
    ['2.', 'null', '3\u202f558,5'],
    ['3.', 'RE', '449,5'],
    ['4.', 'YT', '407,5'],
    ['5.', 'AL', '313,2'],
  ];
  return (
    <div className="mt-[76px] ml-[12px] w-[574px] text-[24px]">
      <div className="flex h-[52px] items-center bg-[#e0e0e0] pl-[80px] text-[28px] font-bold">
        <div className="w-[255px]">customer_coun…</div>
        <div>sale_amount_in…</div>
      </div>
      {rows.map(([n, a, b]) => (
        <div key={n} className="flex h-[58px] items-center border-b-2 border-[#ccc] pr-[16px] pl-[16px]">
          <div className="w-[64px]">{n}</div>
          <div className="flex-1">{a}</div>
          <div>{b}</div>
        </div>
      ))}
    </div>
  );
}

function HotelTable() {
  const rows = [
    ['1.', '5', '3\u202f985'],
    ['2.', '2', '239'],
    ['3.', '7', '90'],
    ['4.', '1', '44'],
    ['5.', '6', '15'],
  ];
  return (
    <div className="ml-[100px] w-[300px] text-[24px]">
      <div className="flex h-[34px] items-center pl-[48px]">
        <div className="w-[128px]">1 - 5 / 5</div>
        <svg className="h-[26px] w-[14px]" viewBox="0 0 14 26" fill="none" stroke="#999" strokeWidth="4">
          <path d="M12.500 2L2.500 13l10 11" />
        </svg>
        <svg className="ml-[58px] h-[26px] w-[14px]" viewBox="0 0 14 26" fill="none" stroke="#999" strokeWidth="4">
          <path d="M1.500 2l10 11-10 11" />
        </svg>
      </div>
      <div className="mt-[94px] flex h-[52px] items-center justify-between bg-[#e0e0e0] pr-[16px] pl-[49px] text-[28px] font-bold">
        <div>hotel_id</div>
        <div>pms_id</div>
      </div>
      {rows.map(([n, a, b]) => (
        <div key={n} className="flex h-[58px] items-center border-b-2 border-[#ccc] pr-[16px] pl-[16px]">
          <div className="w-[34px]">{n}</div>
          <div className="flex-1">{a}</div>
          <div>{b}</div>
        </div>
      ))}
    </div>
  );
}

function LeftRail() {
  return (
    <aside className="flex w-[114px] shrink-0 flex-col border-r-2 border-[#dadce0] bg-white text-[40px] text-[#5f6368]">
      <div className="mt-[54px] ml-[16px] flex size-20 items-center justify-center rounded-full bg-[#d3e2fb] pb-0.5 text-[#2a72e5]">1</div>
      {['2', '3', '4'].map((n) => (
        <div key={n} className="mt-4 ml-[16px] flex size-20 items-center justify-center pb-0.5">
          {n}
        </div>
      ))}
      <div className="mt-auto flex h-[106px] items-center border-t-2 border-[#dadce0] pl-[51px]">
        <svg className="h-[26px] w-[16px]" viewBox="0 0 16 26" fill="none" stroke="#5f6368" strokeWidth="4">
          <path d="M2 2l11 11L2 24" />
        </svg>
      </div>
    </aside>
  );
}

function RightRail() {
  return (
    <aside className="flex w-[160px] shrink-0 flex-col items-center border-l-2 border-[#bdc1c6] bg-white pr-[2px] text-[24px] leading-[24px] font-medium tracking-[0.5px] text-[#5f6368]">
      <svg className="mt-[41px] size-10" viewBox="0 0 40 40" fill="none" stroke="currentColor" strokeWidth="4">
        <path d="M2 2h36v36H2zM2 14h36M2 26h36M8 6v4M8 18v4M8 30v4" />
      </svg>
      <div className="mt-[14px]">Données</div>
      <svg className="mt-[68px] size-9" viewBox="0 0 36 36" fill="none" stroke="currentColor" strokeWidth="4">
        <path d="M2 34v-6L25 5l6 6L8 34z" />
        <path d="M22.500 9l7-7.500q2-2 4 0l1.500 1.500q2 2 0 4L28 14z" fill="currentColor" stroke="none" />
      </svg>
      <div className="mt-[16px]">Propriétés</div>
      <MdOutlineFilterAlt className="mt-[50px] size-12" />
      <div className="mt-[10px] text-center">
        Barre de
        <br />
        filtre
      </div>
      <svg className="mt-auto mb-[47px] ml-[18px] h-[26px] w-[16px]" viewBox="0 0 16 26" fill="none" stroke="#5f6368" strokeWidth="4">
        <path d="M2 2l11 11L2 24" />
      </svg>
    </aside>
  );
}

export default function App() {
  return (
    <div className="flex h-[1578px] w-[2880px] flex-col overflow-hidden bg-black font-['Roboto',sans-serif]">
      <div className="flex h-[1578px] flex-col overflow-hidden rounded-b-[20px] bg-white">
        <Header />
        <Toolbar />
        <div className="flex h-[1366px]">
          <LeftRail />
          <main className="flex flex-1 overflow-hidden bg-[#ededed] pl-[103px]">
            <div className="w-[2400px] bg-white pl-[178px] text-black shadow-[0_0_6px_rgba(0,0,0,0.35)]">
              <div className="flex h-[64px] w-[600px] justify-between pr-[45px] pl-[48px] text-[28px] shadow-[0_2px_6px_rgba(0,0,0,0.5)]">
                <span className="pt-px leading-[28px] tracking-[0.25px]">1 janv. 2023 - 31 déc. 2023</span>
                <Caret className="mt-[10px]" />
              </div>
              <div className="mt-[54px] flex h-[632px]">
                <Chart />
                <CountryTable />
              </div>
              <div className="flex">
                <WorldMap />
                <HotelTable />
              </div>
            </div>
          </main>
          <RightRail />
        </div>
      </div>
    </div>
  );
}
